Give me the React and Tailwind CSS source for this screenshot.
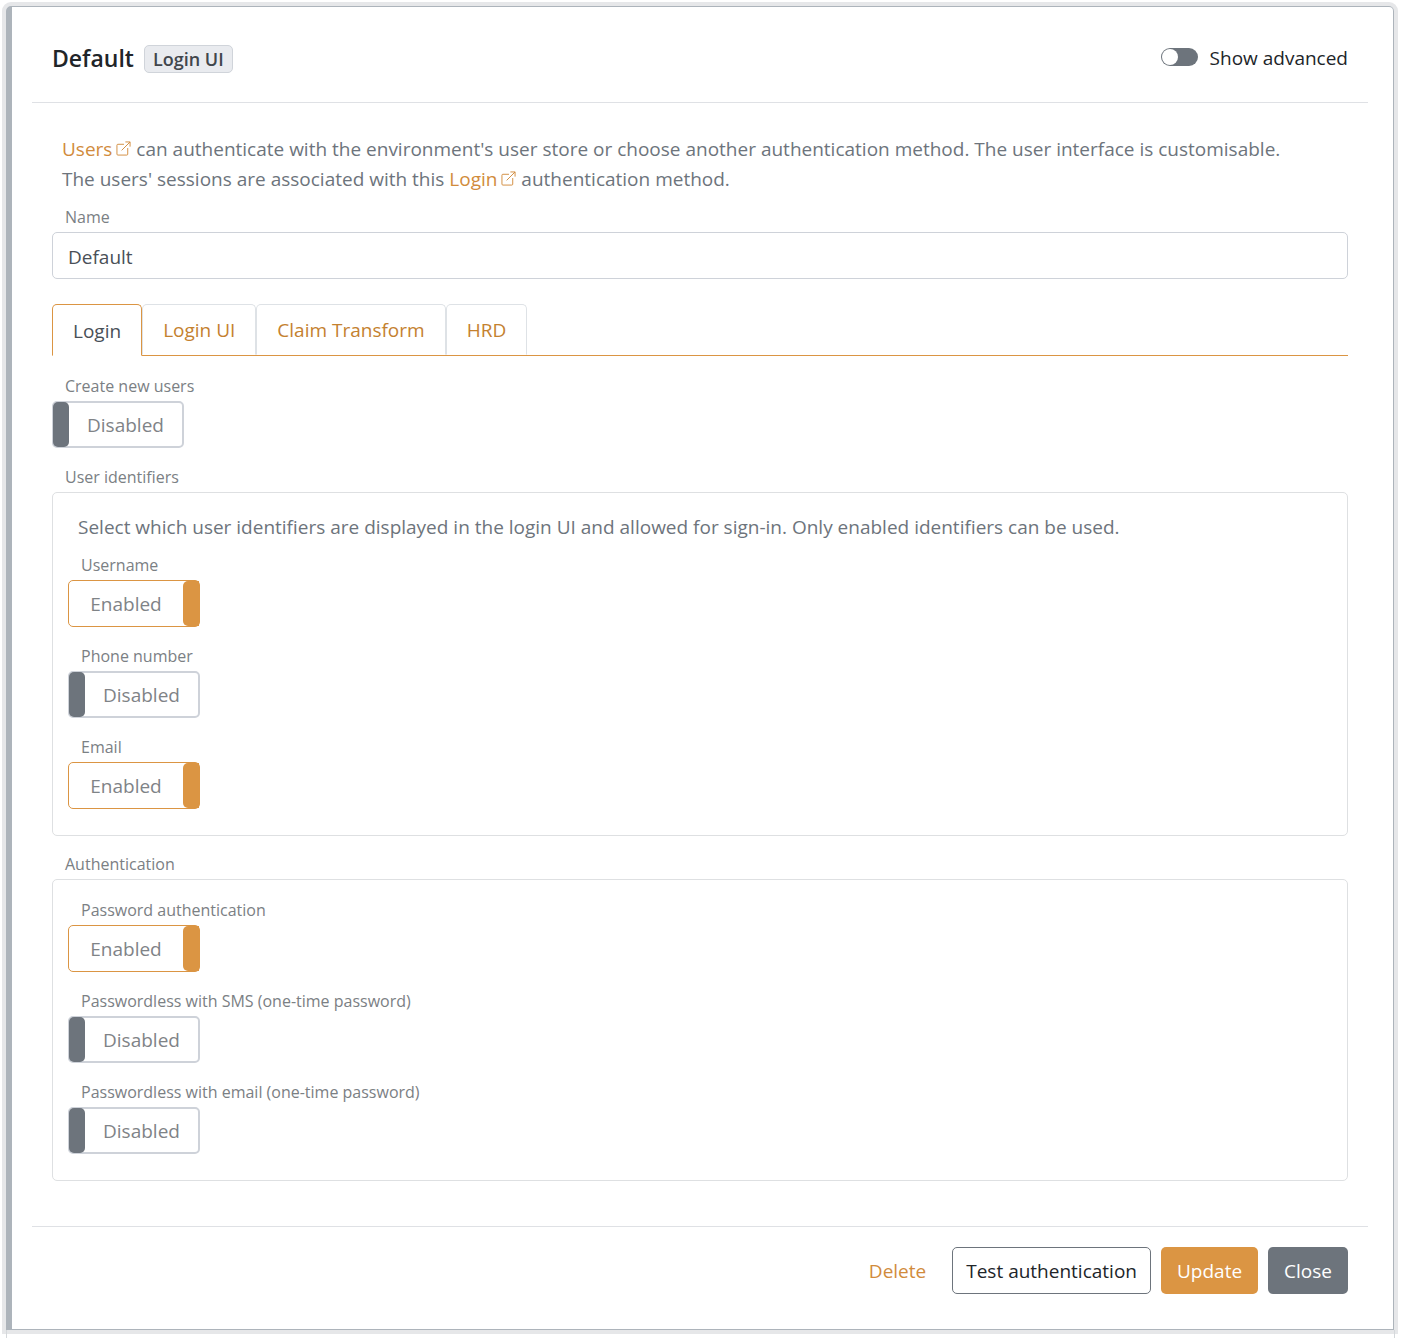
import React, { useState } from 'react';

const tabs = ['Login', 'Login UI', 'Claim Transform', 'HRD'];

const identifiers = [
  { id: 'username', label: 'Username', on: true },
  { id: 'phone', label: 'Phone number', on: false },
  { id: 'email', label: 'Email', on: true },
];

const authMethods = [
  { id: 'password', label: 'Password authentication', on: true },
  { id: 'sms', label: 'Passwordless with SMS (one-time password)', on: false },
  { id: 'emailOtp', label: 'Passwordless with email (one-time password)', on: false },
];

const ExternalLink = ({ href, children }) => (
  <a href={href} className="text-[#d18b3c] hover:underline">
    {children}
    <svg viewBox="0 0 16 16" className="inline-block w-[15px] h-[15px] ml-1 mb-1" fill="none" stroke="currentColor" strokeWidth="1" aria-hidden="true">
      <path d="M8.5 3.500H2a1 1 0 0 0-1 1V14a1 1 0 0 0 1 1h9.500a1 1 0 0 0 1-1V7.500" />
      <path d="M10 1h5v5M15 1L6 10" />
    </svg>
  </a>
);

const Toggle = ({ id, label, on }) => {
  const [enabled, setEnabled] = useState(on);

  return (
    <div className="mb-4">
      <label htmlFor={id} className="block w-fit pl-[13px] h-7 leading-[26px] text-base text-[#7b8084]">{label}</label>
      <button
        id={id}
        type="button"
        aria-pressed={enabled}
        onClick={() => setEnabled(!enabled)}
        className={`flex w-[132px] h-[47px] rounded-[5px] bg-white text-[#7f8387] ${enabled ? 'flex-row-reverse border border-[#db9543]' : 'border-2 border-[#ced2d9]'}`}
      >
        <span className={enabled ? 'w-4 h-full rounded-l-[5px] bg-[#db9543]' : '-ml-px -mt-px w-4 h-[45px] rounded-[5px] bg-[#6d747c]'} />
        <span className="flex-1 h-full flex items-center justify-center pt-0.5">{enabled ? 'Enabled' : 'Disabled'}</span>
      </button>
    </div>
  );
};

const Group = ({ title, children }) => (
  <fieldset className="mb-[15px]">
    <legend className="pl-[13px] h-7 leading-[26px] text-base text-[#7b8084]">{title}</legend>
    <div className="border border-[#dee0e2] rounded-[5px] px-[15px] pb-[10px]">{children}</div>
  </fieldset>
);

const App = () => {
  const [activeTab, setActiveTab] = useState('Login');
  const [advanced, setAdvanced] = useState(false);
  const [name, setName] = useState('Default');

  return (
    <div className="bg-white px-[6px] pt-[6px] font-['Open_Sans','Noto_Sans',sans-serif] text-[19px]">
      <div className="mr-px rounded-t-[5px] border border-l-[6px] border-[#adb4bb] ring-4 ring-[#e6e7e9] pl-5 pr-[25px] pb-[35px]">
        {/* Header */}
        <div className="flex items-center justify-between h-24 px-5 pt-2 border-b border-[#dfe1e5]">
          <div className="flex items-center gap-[10px]">
            <h1 className="text-[23px] font-semibold text-[#212529]">Default</h1>
            <span className="h-7 leading-[26px] px-2 rounded-[5px] border border-[#d0d4da] bg-[#e9ebef] text-lg/[26px] font-semibold text-[#41464c]">Login UI</span>
          </div>
          <label className="flex items-center gap-3 text-[#212529] cursor-pointer">
            <input
              type="checkbox"
              role="switch"
              checked={advanced}
              onChange={e => setAdvanced(e.target.checked)}
              className="appearance-none flex items-center w-[37px] h-[18px] mb-1 rounded-full bg-[#6d747c] px-px before:block before:w-4 before:h-4 before:rounded-full before:bg-white checked:justify-end checked:bg-[#db9543]"
            />
            Show advanced
          </label>
        </div>

        <div className="px-5">
          <p className="pt-[31px] px-[10px] leading-[30px] text-[#6d747c]">
            <ExternalLink href="#users">Users</ExternalLink> can authenticate with the environment's user store or choose another authentication method. The user interface is customisable.
            <br />
            The users' sessions are associated with this <ExternalLink href="#login">Login</ExternalLink> authentication method.
          </p>

          <label htmlFor="name" className="block w-fit mt-[10px] pl-[13px] h-7 leading-[26px] text-base text-[#7b8084]">Name</label>
          <input
            id="name"
            value={name}
            onChange={e => setName(e.target.value)}
            className="block w-full h-[47px] px-[15px] pt-0.5 rounded-[5px] border border-[#ced2d9] text-[#495057] outline-none"
          />

          {/* Tabs */}
          <div role="tablist" className="flex mt-[25px] h-[52px] border-b border-[#db9543]">
            {tabs.map((tab) => (
              <button
                key={tab}
                type="button"
                role="tab"
                aria-selected={activeTab === tab}
                onClick={() => setActiveTab(tab)}
                className={`px-5 pt-0.5 border rounded-t-[5px] ${activeTab === tab ? 'h-[52px] bg-white border-[#db9543] border-b-white text-[#495057]' : 'h-[51px] border-[#dee2e6] border-b-transparent text-[#c4812f]'}`}
              >
                {tab}
              </button>
            ))}
          </div>

          <div className="pt-[17px]">
            <Toggle id="createUsers" label="Create new users" on={false} />
            <Group title="User identifiers">
              <p className="pt-[19px] pb-[10px] px-[10px] leading-[30px] text-[#6d747c]">
                Select which user identifiers are displayed in the login UI and allowed for sign-in. Only enabled identifiers can be used.
              </p>
              {identifiers.map((item) => <Toggle key={item.id} {...item} />)}
            </Group>
            <Group title="Authentication">
              <div className="pt-[17px]">
                {authMethods.map((item) => <Toggle key={item.id} {...item} />)}
              </div>
            </Group>
          </div>
        </div>

        {/* Footer */}
        <div className="flex justify-end gap-[10px] mt-[45px] pt-5 px-5 border-t border-[#dfe1e5]">
          <button type="button" className="h-[47px] px-4 pt-0.5 text-[#d18b3c]">Delete</button>
          <button type="button" className="h-[47px] px-[13px] pt-0.5 rounded-[5px] border border-[#6d747c] text-[#212529]">Test authentication</button>
          <button type="button" className="h-[47px] px-4 pt-0.5 rounded-[5px] bg-[#db9543] text-white">Update</button>
          <button type="button" className="h-[47px] px-4 pt-0.5 rounded-[5px] bg-[#6d747c] text-white">Close</button>
        </div>
      </div>
      {/* Top of the next list entry */}
      <div className="h-2 border-x border-[#d5d8db]" />
    </div>
  );
};

export default App;
